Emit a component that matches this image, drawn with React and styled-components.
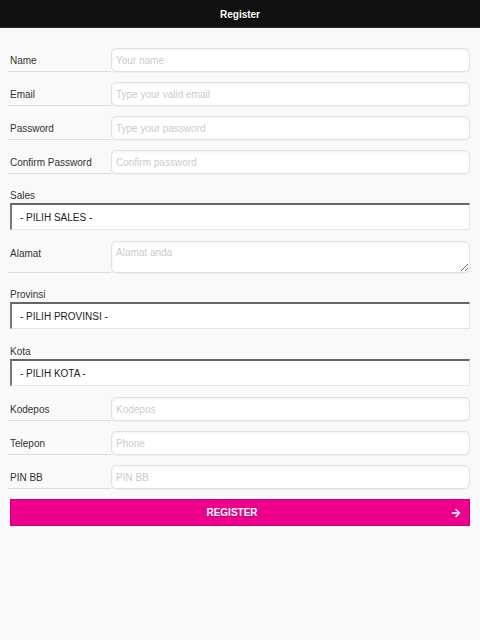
import React from "react";
import styled, { createGlobalStyle } from "styled-components";
import { FaArrowRight } from "react-icons/fa";

const Global = createGlobalStyle`
  html, body { margin: 0; padding: 0; background: #f9f9f9; }
  body { font-family: "Liberation Sans", Arial, Helvetica, sans-serif; }
  * { box-sizing: border-box; }
`;

const Page = styled.div`
  width: 480px;
  min-height: 640px;
  background: #f9f9f9;
`;

const Header = styled.header`
  height: 28px;
  background: #111;
  border-bottom: 1px solid #2a2a2a;
  color: #fff;
  font-weight: bold;
  font-size: 10px;
  display: flex;
  align-items: center;
  justify-content: center;
  padding-top: 1px;
  text-shadow: 0 1px 0 #000;
`;

const Form = styled.form`
  padding: 20px 10px 0 10px;
  display: flex;
  flex-direction: column;
`;

const Row = styled.div`
  display: grid;
  grid-template-columns: 101px 1fr;
  margin-bottom: 10px;
`;

const Label = styled.label`
  height: ${(p) => p.$h || 24}px;
  display: flex;
  align-items: ${(p) => (p.$top ? "flex-start" : "center")};
  padding-top: ${(p) => (p.$top ? "7px" : "2px")};
  font-size: 10px;
  color: #333;
  border-bottom: 1px solid #dcdcdc;
  margin-left: -2px;
  padding-left: 2px;
`;

const fieldBase = `
  width: 100%;
  border: 1px solid #e2e2e2;
  border-radius: 5px;
  background: #fff;
  box-shadow: inset 0 1px 3px rgba(0,0,0,0.06), 0 1px 0 rgba(0,0,0,0.04);
  font-family: "Liberation Sans", Arial, Helvetica, sans-serif;
  font-size: 10px;
  color: #333;
  padding: 0 4px;
  outline: none;
  &::placeholder { color: #cbcbcb; }
`;

const Input = styled.input`
  ${fieldBase}
  height: 24px;
`;

const TextArea = styled.textarea`
  ${fieldBase}
  height: 32px;
  padding-top: 5px;
  resize: vertical;
  display: block;
`;

const SelectBlock = styled.div`
  margin-top: 4px;
  margin-bottom: 11px;
  display: flex;
  flex-direction: column;
`;

const SelectLabel = styled.div`
  font-size: 10px;
  line-height: 14px;
  color: #333;
  padding-top: 1px;
`;

const SelectBox = styled.div`
  height: 27px;
  background: #fff;
  border: 1px solid #e4e4e4;
  border-top: 2px solid #666;
  border-left: 2px solid #777;
  display: flex;
  align-items: center;
  padding-left: 8px;
  font-size: 10px;
  color: #222;
`;

const Button = styled.button`
  position: relative;
  height: 27px;
  width: 100%;
  background: #ec008c;
  border: 1px solid #c4007a;
  color: #fff;
  font-family: "Liberation Sans", Arial, Helvetica, sans-serif;
  font-weight: bold;
  font-size: 10px;
  display: flex;
  align-items: center;
  justify-content: center;
  text-shadow: 0 1px 0 rgba(0,0,0,0.25);
  padding: 0 16px 0 0;
`;

const Icon = styled.span`
  position: absolute;
  right: 8px;
  top: 50%;
  transform: translateY(-50%);
  display: flex;
`;

const textRows = [
  ["Name", "Your name", "text"],
  ["Email", "Type your valid email", "email"],
  ["Password", "Type your password", "password"],
  ["Confirm Password", "Confirm password", "password"],
];

const bottomRows = [
  ["Kodepos", "Kodepos"],
  ["Telepon", "Phone"],
  ["PIN BB", "PIN BB"],
];

function Select({ label, value }) {
  return (
    <SelectBlock>
      <SelectLabel>{label}</SelectLabel>
      <SelectBox>{value}</SelectBox>
    </SelectBlock>
  );
}

export default function App() {
  return (
    <Page>
      <Global />
      <Header>Register</Header>
      <Form onSubmit={(e) => e.preventDefault()}>
        {textRows.map(([l, p, t]) => (
          <Row key={l}>
            <Label>{l}</Label>
            <Input type={t} placeholder={p} />
          </Row>
        ))}
        <Select label="Sales" value="- PILIH SALES -" />
        <Row>
          <Label $h={32} $top>Alamat</Label>
          <TextArea placeholder="Alamat anda" />
        </Row>
        <Select label="Provinsi" value="- PILIH PROVINSI -" />
        <Select label="Kota" value="- PILIH KOTA -" />
        {bottomRows.map(([l, p]) => (
          <Row key={l}>
            <Label>{l}</Label>
            <Input placeholder={p} />
          </Row>
        ))}
        <Button type="submit">
          REGISTER
          <Icon>
            <FaArrowRight size={10} color="#fff" />
          </Icon>
        </Button>
      </Form>
    </Page>
  );
}
